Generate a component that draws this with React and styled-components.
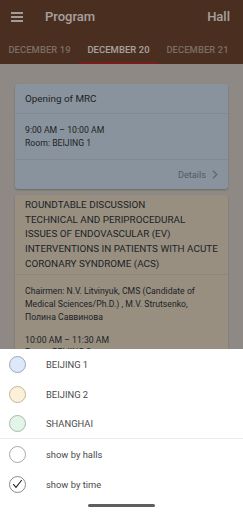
import React from 'react';
import styled, { createGlobalStyle } from 'styled-components';

const GlobalStyle = createGlobalStyle`
  html, body {
    margin: 0;
    padding: 0;
    height: 100%;
    overflow: hidden;
    background: #d1cbc5;
    font-family: Roboto, 'Liberation Sans', sans-serif;
  }
  * { box-sizing: border-box; }
`;

const Screen = styled.div`
  width: 243px;
  height: 512px;
  position: relative;
  overflow: hidden;
  background: #d1cbc5;
`;

const AppBar = styled.header`
  background: #6d442e;
  color: #f3ebe6;
`;

const TopRow = styled.div`
  height: 34px;
  display: flex;
  align-items: center;
  padding: 0 13px 0 11px;
`;

const MenuButton = styled.div`
  width: 12px;
  display: flex;
  flex-direction: column;
  gap: 2.5px;
  margin-right: 22px;
  span {
    height: 1.5px;
    background: #efe6e0;
  }
`;

const Title = styled.div`
  flex: 1;
  font-size: 13px;
  font-weight: 500;
  margin-top: -1px;
`;

const HallLink = styled.div`
  font-size: 13px;
  font-weight: 500;
  margin-top: -1px;
`;

const Tabs = styled.nav`
  display: flex;
  height: 30px;
`;

const Tab = styled.div`
  width: 79px;
  flex-shrink: 0;
  display: flex;
  align-items: center;
  justify-content: center;
  font-size: 9.4px;
  font-weight: 500;
  letter-spacing: 0.1px;
  color: ${({ active }) => (active ? '#f6eee9' : 'rgba(255,255,255,0.5)')};
  border-bottom: 2px solid ${({ active }) => (active ? '#b52a2a' : 'transparent')};
  padding-top: 2px;
`;

const List = styled.main`
  padding: 20px 15px;
  display: flex;
  flex-direction: column;
  gap: 6px;
`;

const Card = styled.section`
  background: ${({ tone }) => tone};
  border-radius: 3px;
  box-shadow: 0 1px 2px rgba(0, 0, 0, 0.25);
  color: #2f3337;
`;

const CardHead = styled.div`
  padding: ${({ tight }) => (tight ? '3px 4px 2px 10px' : '8px 10px 7px')};
  font-size: 9.9px;
  line-height: ${({ tight }) => (tight ? '14.7px' : '14px')};
  border-bottom: 1px solid rgba(0, 0, 0, 0.06);
  white-space: nowrap;
`;

const CardBody = styled.div`
  padding: 10px 10px 10px;
  font-size: 8.7px;
  line-height: 12.5px;
  border-bottom: 1px solid rgba(0, 0, 0, 0.06);
`;

const Chairmen = styled.div`
  font-size: 8.7px;
  line-height: 13px;
  margin-bottom: 10px;
`;

const CardFoot = styled.div`
  height: 29px;
  display: flex;
  align-items: center;
  justify-content: flex-end;
  padding-right: 10px;
  gap: 6px;
  font-size: 9.2px;
  color: #7c8690;
`;

const Scrim = styled.div`
  position: absolute;
  inset: 0;
  background: rgba(0, 0, 0, 0.32);
`;

const Sheet = styled.div`
  position: absolute;
  left: 0;
  right: 0;
  bottom: 0;
  height: 163px;
  background: #ffffff;
  display: flex;
  flex-direction: column;
`;

const Option = styled.div`
  height: ${({ h }) => h || 30}px;
  display: flex;
  align-items: center;
  padding-left: 9px;
  font-size: 9.4px;
  color: #4a4a4a;
`;

const Dot = styled.span`
  width: 17px;
  height: 17px;
  border-radius: 50%;
  background: ${({ fill }) => fill};
  border: 1px solid ${({ ring }) => ring};
  margin-right: 20px;
  display: flex;
  align-items: center;
  justify-content: center;
  flex-shrink: 0;
`;

const Divider = styled.div`
  height: 1px;
  background: #ececec;
`;

const Handle = styled.div`
  width: 67px;
  height: 3px;
  border-radius: 2px;
  background: #5e5e5e;
  margin: 5px auto 0;
`;

const halls = [
  { name: 'BEIJING 1', fill: '#dde9f9', ring: '#98a8bc' },
  { name: 'BEIJING 2', fill: '#fdf0d8', ring: '#c5b498' },
  { name: 'SHANGHAI', fill: '#e2f5e8', ring: '#a3bba9' },
];

const roundtable = [
  'ROUNDTABLE DISCUSSION',
  'TECHNICAL AND PERIPROCEDURAL',
  'ISSUES OF ENDOVASCULAR (EV)',
  'INTERVENTIONS IN PATIENTS WITH ACUTE',
  'CORONARY SYNDROME (ACS)',
];

function Chevron() {
  return (
    <svg width="6" height="9" viewBox="0 0 6 9">
      <path d="M1 0.8 L4.8 4.5 L1 8.2" fill="none" stroke="#8d97a1" strokeWidth="1.2" />
    </svg>
  );
}

function Check() {
  return (
    <svg width="11" height="10" viewBox="0 0 11 10">
      <path d="M1.2 5.2 L4 8.3 L9.8 1" fill="none" stroke="#222" strokeWidth="1.1" />
    </svg>
  );
}

export default function App() {
  return (
    <Screen>
      <GlobalStyle />
      <AppBar>
        <TopRow>
          <MenuButton>
            <span />
            <span />
            <span />
          </MenuButton>
          <Title>Program</Title>
          <HallLink>Hall</HallLink>
        </TopRow>
        <Tabs>
          <Tab>DECEMBER 19</Tab>
          <Tab active>DECEMBER 20</Tab>
          <Tab>DECEMBER 21</Tab>
        </Tabs>
      </AppBar>

      <List>
        <Card tone="#cbd9e7">
          <CardHead>Opening of MRC</CardHead>
          <CardBody>
            <div>9:00 AM – 10:00 AM</div>
            <div>Room: BEIJING 1</div>
          </CardBody>
          <CardFoot>
            Details <Chevron />
          </CardFoot>
        </Card>
        <Card tone="#e0d3bf">
          <CardHead tight>
            {roundtable.map(line => (
              <div key={line}>{line}</div>
            ))}
          </CardHead>
          <CardBody>
            <Chairmen>
              Chairmen: N.V. Litvinyuk, CMS (Candidate of Medical Sciences/Ph.D.) , M.V. Strutsenko, Полина Саввинова
            </Chairmen>
            <div>10:00 AM – 11:30 AM</div>
            <div>Room: BEIJING 2</div>
          </CardBody>
          <CardFoot>
            Details <Chevron />
          </CardFoot>
        </Card>
      </List>

      <Scrim />

      <Sheet>
        {halls.map(h => (
          <Option key={h.name} h={h.name === 'SHANGHAI' ? 29 : 30}>
            <Dot fill={h.fill} ring={h.ring} />
            {h.name}
          </Option>
        ))}
        <Divider />
        <Option>
          <Dot fill="#fff" ring="#a8a8a8" />
          show by halls
        </Option>
        <Option>
          <Dot fill="#fff" ring="#8a8a8a">
            <Check />
          </Dot>
          show by time
        </Option>
        <Handle />
      </Sheet>
    </Screen>
  );
}
